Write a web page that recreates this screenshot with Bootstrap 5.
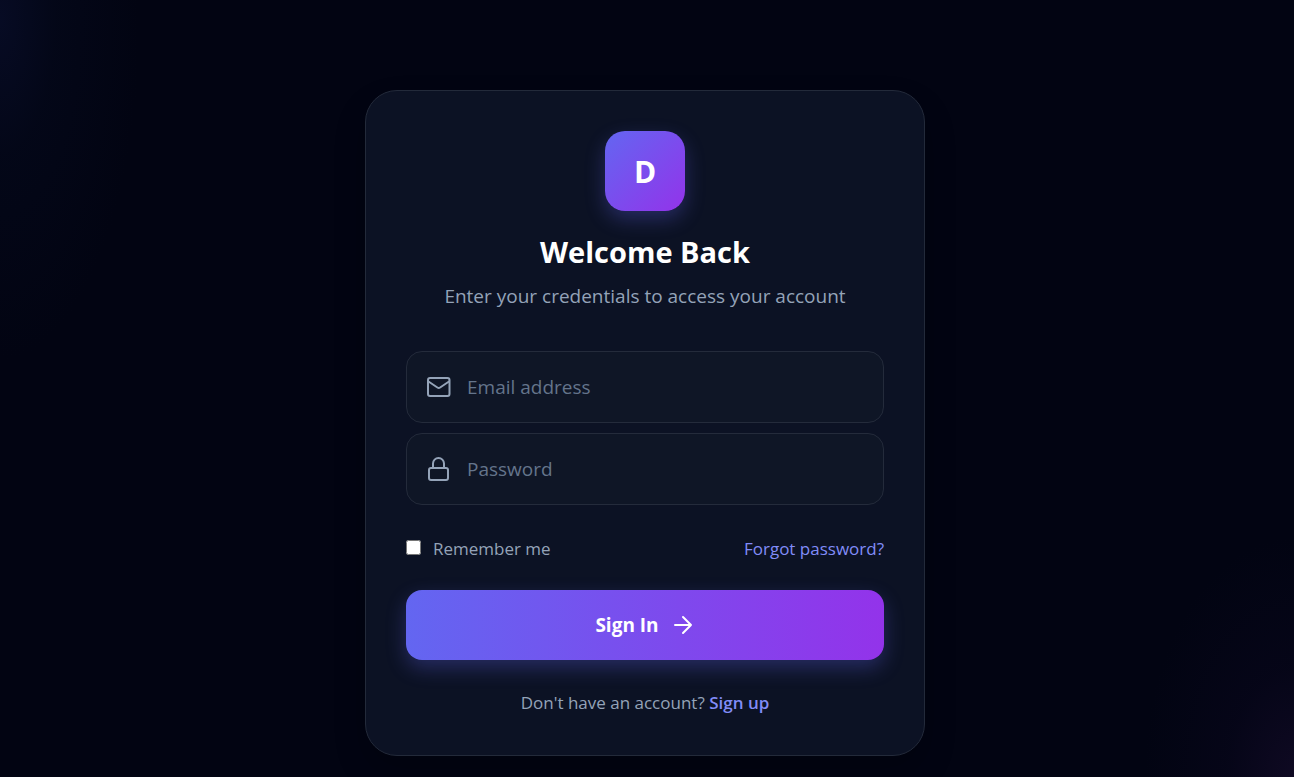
<!DOCTYPE html>
<html lang="en">
<head>
<meta charset="utf-8">
<meta name="viewport" content="width=device-width, initial-scale=1">
<title>Sign In</title>
<link href="https://cdn.jsdelivr.net/npm/bootstrap@5.3.0/dist/css/bootstrap.min.css" rel="stylesheet">
<style>
  body {
    font-family: "Segoe UI", "Open Sans", "Noto Sans", sans-serif;
    background-color: #020412;
    background-image:
      radial-gradient(ellipse 140px 340px at 0 20px, rgba(8, 13, 40, .8), rgba(4, 8, 26, .7) 40%, rgba(2, 4, 18, 0)),
      radial-gradient(ellipse 150px 240px at 100% 100%, rgba(16, 10, 36, .9), rgba(7, 6, 26, .7) 45%, rgba(2, 4, 18, 0));
    background-attachment: fixed;
    color: #94a3b8;
  }
  .page-shell { padding: 90px 20px 20px 16px; }
  .login-card {
    max-width: 560px;
    padding: 40px;
    background: #0c1224;
    border: 1px solid #232a3a;
    border-radius: 32px;
    box-shadow: 0 16px 32px rgba(0, 0, 0, .2);
  }
  .logo-tile {
    width: 80px;
    height: 80px;
    border-radius: 20px;
    background: linear-gradient(135deg, #6366f1, #9333ea);
    box-shadow: 0 8px 20px rgba(99, 102, 241, .3);
    font-size: 30px;
  }
  .login-title { font-size: 29px; line-height: 34px; }
  .login-lead { font-size: 19px; line-height: 30px; margin: 12px 0 0; }
  .login-form { margin-top: 40px; }
  .field-stack { gap: 10px; }
  .field-box {
    height: 72px;
    padding: 0 20px;
    gap: 16px;
    background: #0f1626;
    border: 1px solid #242b3b;
    border-radius: 16px;
  }
  .field-box:focus-within { border-color: #6366f1; }
  .field-box input { font-size: 19px; color: #fff; outline: 0; min-width: 0; }
  .field-box input::placeholder { color: #64748b; opacity: 1; }
  .small-row { font-size: 17px; line-height: 24px; }
  .options-row { margin: 32px 0 29px; }
  .remember-group { gap: 12px; }
  .remember-box { width: 15px; height: 15px; margin: 0 0 4px; }
  .accent-link { color: #818cf8; }
  .btn-signin {
    height: 70px;
    gap: 12px;
    border: 0;
    border-radius: 16px;
    color: #fff;
    font-size: 19px;
    background: linear-gradient(90deg, #6366f1, #9333ea);
    box-shadow: 0 8px 20px rgba(99, 102, 241, .3);
  }
  .btn-signin:hover { color: #fff; }
  .signup-row { margin: 31px 0 0; }
</style>
</head>
<body>
<main class="page-shell min-vh-100">
  <section class="login-card mx-auto">
    <header class="text-center">
      <div class="logo-tile d-flex align-items-center justify-content-center mx-auto text-white fw-bold">D</div>
      <h1 class="login-title text-white fw-bold mt-4 mb-0">Welcome Back</h1>
      <p class="login-lead">Enter your credentials to access your account</p>
    </header>
    <form class="login-form">
      <div class="field-stack d-flex flex-column">
        <div class="field-box d-flex align-items-center">
          <svg width="24" height="24" viewBox="0 0 24 24" fill="none" stroke="#94a3b8" stroke-width="2" stroke-linecap="round" stroke-linejoin="round" aria-hidden="true"><rect x="1" y="3" width="21.500" height="18" rx="2"/><path d="M1.500 6.500l8.900 6a2.400 2.400 0 0 0 2.700 0l8.900-6"/></svg>
          <input class="flex-grow-1 bg-transparent border-0 p-0" type="email" placeholder="Email address" aria-label="Email address">
        </div>
        <div class="field-box d-flex align-items-center">
          <svg width="24" height="24" viewBox="0 0 24 24" fill="none" stroke="#94a3b8" stroke-width="2" stroke-linecap="round" stroke-linejoin="round" aria-hidden="true"><rect x="2" y="11" width="19" height="12" rx="2"/><path d="M6 11V6.500a5.500 5.500 0 0 1 11 0V11"/></svg>
          <input class="flex-grow-1 bg-transparent border-0 p-0" type="password" placeholder="Password" aria-label="Password">
        </div>
      </div>
      <div class="small-row options-row d-flex justify-content-between align-items-center">
        <div class="remember-group d-flex align-items-center">
          <input class="remember-box" type="checkbox" id="remember">
          <label for="remember">Remember me</label>
        </div>
        <a class="accent-link text-decoration-none" href="#">Forgot password?</a>
      </div>
      <button class="btn btn-signin w-100 fw-bold d-flex align-items-center justify-content-center" type="submit">
        <span>Sign In</span>
        <svg width="24" height="24" viewBox="0 0 24 24" fill="none" stroke="currentColor" stroke-width="2" stroke-linecap="round" stroke-linejoin="round" aria-hidden="true"><path d="M4 12h16M12 4l8 8-8 8"/></svg>
      </button>
    </form>
    <p class="small-row signup-row text-center">Don't have an account? <a class="accent-link fw-semibold text-decoration-none" href="#">Sign up</a></p>
  </section>
</main>
<script src="https://cdn.jsdelivr.net/npm/bootstrap@5.3.0/dist/js/bootstrap.bundle.min.js"></script>
</body>
</html>
